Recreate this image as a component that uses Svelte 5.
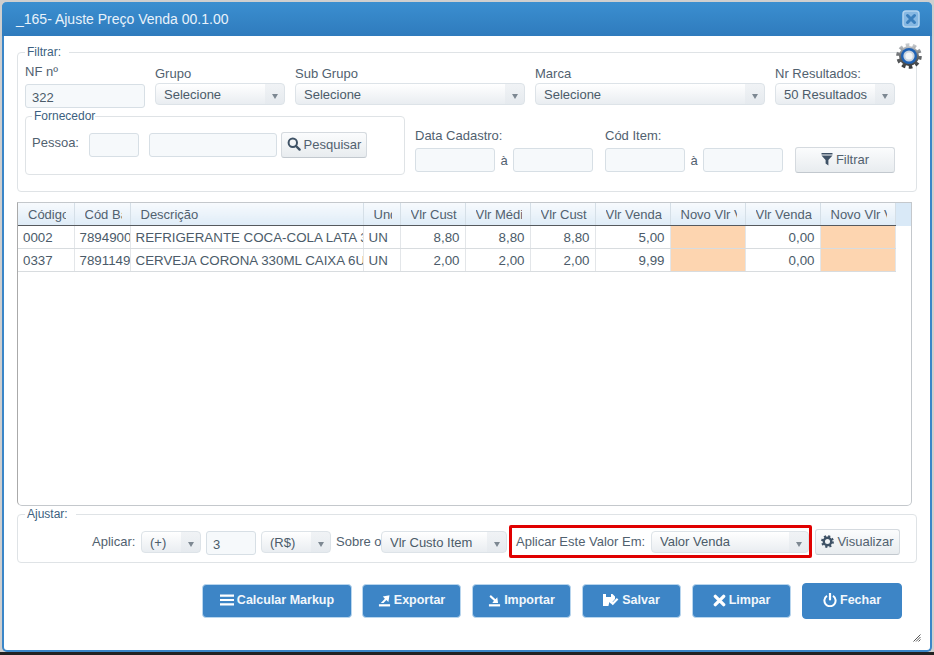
<script lang="ts">
	const columns = [
		{ label: 'Código', width: 56 },
		{ label: 'Cód Barras', width: 56 },
		{ label: 'Descrição', width: 233 },
		{ label: 'Und', width: 37 },
		{ label: 'Vlr Custo', width: 65 },
		{ label: 'Vlr Médio', width: 65 },
		{ label: 'Vlr Custo', width: 65 },
		{ label: 'Vlr Venda', width: 75 },
		{ label: 'Novo Vlr Venda', width: 75 },
		{ label: 'Vlr Venda', width: 75 },
		{ label: 'Novo Vlr Venda', width: 75 }
	];

	const rows = [
		['0002', '7894900011517', 'REFRIGERANTE COCA-COLA LATA 350ML', 'UN', '8,80', '8,80', '8,80', '5,00', '', '0,00', ''],
		['0337', '7891149103102', 'CERVEJA CORONA 330ML CAIXA 6UN', 'UN', '2,00', '2,00', '2,00', '9,99', '', '0,00', '']
	];

	function cellClass(i: number) {
		if (i === 8 || i === 10) return 'edit';
		return i >= 4 ? 'num' : '';
	}
</script>

{#snippet select(text: string, width: number)}
	<div class="select" style="width: {width}px">
		<select><option>{text}</option></select>
		<span class="arrow"></span>
	</div>
{/snippet}

<div class="page">
	<div class="window">
		<header class="titlebar">
			<h1>_165- Ajuste Preço Venda 00.1.00</h1>
			<button class="close" aria-label="Fechar janela">
				<svg viewBox="0 0 18 18" width="18" height="18">
					<rect x="1" y="1" width="16" height="16" rx="3" fill="#86b8e3" stroke="#b5d5f0" stroke-width="1.5" />
					<path d="M5.5 5.5l7 7M12.5 5.5l-7 7" stroke="#3a7fbd" stroke-width="3" stroke-linecap="round" />
				</svg>
			</button>
		</header>

		<svg class="gear" viewBox="0 0 26 26" width="26" height="26" aria-hidden="true">
			<defs>
				<linearGradient id="teeth" x1="0" y1="0" x2="0" y2="1">
					<stop offset="0" stop-color="#c4c8cc" />
					<stop offset="0.45" stop-color="#6d7073" />
					<stop offset="1" stop-color="#3c3e40" />
				</linearGradient>
			</defs>
			<circle cx="13" cy="13" r="11" fill="none" stroke="url(#teeth)" stroke-width="3.6" stroke-dasharray="3.6 3.3" />
			<circle cx="13" cy="13" r="10" fill="url(#teeth)" />
			<circle cx="13" cy="13" r="8" fill="#1f62b5" />
			<circle cx="13" cy="13" r="5.6" fill="#c9d3de" />
			<circle cx="13" cy="13" r="3.6" fill="#f2f5f8" />
		</svg>

		<fieldset class="filtrar">
			<legend>Filtrar:</legend>
			<div class="line">
				<div class="field nf">
					<span class="label">NF nº</span>
					<input class="nf-input" value="322" />
				</div>
				<div class="field">
					<span class="label">Grupo</span>
					{@render select('Selecione', 130)}
				</div>
				<div class="field">
					<span class="label">Sub Grupo</span>
					{@render select('Selecione', 230)}
				</div>
				<div class="field">
					<span class="label">Marca</span>
					{@render select('Selecione', 230)}
				</div>
				<div class="field">
					<span class="label">Nr Resultados:</span>
					{@render select('50 Resultados', 120)}
				</div>
			</div>
			<div class="line second">
				<fieldset class="fornecedor">
					<legend>Fornecedor</legend>
					<span class="label pessoa">Pessoa:</span>
					<input class="small" />
					<input class="name" />
					<button class="btn search">
						<svg viewBox="0 0 14 14" width="14" height="14">
							<circle cx="5.8" cy="5.8" r="4.2" fill="none" stroke="#3f5266" stroke-width="2" />
							<path d="M9 9l3.6 3.6" stroke="#3f5266" stroke-width="2.4" stroke-linecap="round" />
						</svg>
						Pesquisar
					</button>
				</fieldset>
				<div class="field range">
					<span class="label">Data Cadastro:</span>
					<div class="pair">
						<input class="date" />
						<span class="a">à</span>
						<input class="date" />
					</div>
				</div>
				<div class="field range item">
					<span class="label">Cód Item:</span>
					<div class="pair">
						<input class="date" />
						<span class="a">à</span>
						<input class="date" />
					</div>
				</div>
				<button class="btn filter">
					<svg viewBox="0 0 12 14" width="12" height="14">
						<path d="M0.5 1h11v1.4h-11zM0.5 3.6h11L7.4 8v5.4L4.6 11.6V8z" fill="#3f5266" />
					</svg>
					Filtrar
				</button>
			</div>
		</fieldset>

		<div class="grid">
			<table>
				<colgroup>
					{#each columns as col}
						<col style="width: {col.width}px" />
					{/each}
					<col />
				</colgroup>
				<thead>
					<tr>
						{#each columns as col}
							<th><div>{col.label}</div></th>
						{/each}
						<th class="filler"></th>
					</tr>
				</thead>
				<tbody>
					{#each rows as row}
						<tr>
							{#each row as cell, i}
								<td class={cellClass(i)}><div>{cell}</div></td>
							{/each}
						</tr>
					{/each}
				</tbody>
			</table>
		</div>

		<fieldset class="ajustar">
			<legend>Ajustar:</legend>
			<div class="adjust">
				<span class="label aplicar">Aplicar:</span>
				{@render select('(+)', 60)}
				<input class="qty" value="3" />
				{@render select('(R$)', 70)}
				<span class="label sobre">Sobre o</span>
				{@render select('Vlr Custo Item', 126)}
				<div class="highlight">
					<span class="label">Aplicar Este Valor Em:</span>
					{@render select('Valor Venda', 158)}
				</div>
				<button class="btn visualizar">
					<svg viewBox="0 0 14 14" width="13" height="13">
						<circle cx="7" cy="7" r="4" fill="none" stroke="#3f5266" stroke-width="2.6" />
						<circle cx="7" cy="7" r="5.6" fill="none" stroke="#3f5266" stroke-width="2.6" stroke-dasharray="2.2 2.2" />
					</svg>
					Visualizar
				</button>
			</div>
		</fieldset>

		<div class="actions">
			<button class="primary markup">
				<svg viewBox="0 0 14 14" width="14" height="14">
					<path d="M0 1.5h14v2.2H0zM0 5.9h14v2.2H0zM0 10.3h14v2.2H0z" fill="#fff" />
				</svg>
				Calcular Markup
			</button>
			<button class="primary io">
				<svg viewBox="0 0 14 14" width="13" height="13">
					<path d="M1 11h12v2.4H1z" fill="#fff" />
					<path d="M3 9.6L7.4 5 5.2 2.8 12.4 1.4 11.2 8.6 9 6.4 6 9.6z" fill="#fff" />
				</svg>
				Exportar
			</button>
			<button class="primary io">
				<svg viewBox="0 0 14 14" width="13" height="13">
					<path d="M1 11h12v2.4H1z" fill="#fff" />
					<path d="M3 1.2L8 5.6 10 3.6 10.8 9.8 4.6 9.6 6.4 7.4 1.6 3z" fill="#fff" />
				</svg>
				Importar
			</button>
			<button class="primary io">
				<svg viewBox="0 0 16 14" width="16" height="14">
					<path d="M0 1h9.5L12 3.5V6L8 10.6 6.4 9 5.4 13H0z" fill="#fff" />
					<path d="M3 1h5v3H3z" fill="#3d85c6" />
					<path d="M7.4 8.4l2.4 2.4 4.8-5" fill="none" stroke="#fff" stroke-width="2.2" />
				</svg>
				Salvar
			</button>
			<button class="primary io">
				<svg viewBox="0 0 14 14" width="13" height="13">
					<path d="M2.5 2.5l9 9M11.5 2.5l-9 9" stroke="#fff" stroke-width="3.6" stroke-linecap="round" />
				</svg>
				Limpar
			</button>
			<button class="primary fechar">
				<svg viewBox="0 0 14 14" width="14" height="14">
					<path d="M4 2.9a5.6 5.6 0 1 0 6 0" fill="none" stroke="#fff" stroke-width="2" />
					<path d="M7 0.5v6" stroke="#fff" stroke-width="2.2" stroke-linecap="round" />
				</svg>
				Fechar
			</button>
		</div>

		<svg class="resize" viewBox="0 0 8 8" width="8" height="8" aria-hidden="true">
			<path d="M0.5 7.5l7-7M3 7.5l4.5-4.5M5.5 7.5l2-2" stroke="#444" stroke-width="0.9" />
		</svg>
	</div>
</div>

<style>
	:global(body) {
		font-family: 'Liberation Sans', Arial, sans-serif;
		overflow: hidden;
	}
	.page {
		height: 655px;
		padding: 2px 2px 0;
		box-sizing: border-box;
		background: linear-gradient(#cfcfcf 652px, #222 652px);
	}
	.window {
		position: relative;
		height: 650px;
		box-sizing: border-box;
		background: #fff;
		border: 2px solid #3a86c8;
		border-top: 0;
		border-radius: 5px;
	}
	.titlebar {
		display: flex;
		align-items: center;
		justify-content: space-between;
		height: 34px;
		margin: 0 -2px;
		padding: 0 12px 0 14px;
		background: linear-gradient(#3b8fd0, #2f7bbd);
		border-radius: 5px 5px 0 0;
	}
	h1 {
		margin: 0;
		font-size: 14px;
		font-weight: 400;
		color: #e8f2fb;
	}
	.close {
		display: flex;
		padding: 0;
		border: 0;
		background: none;
	}
	.gear {
		position: absolute;
		top: 41px;
		right: 8px;
	}
	fieldset {
		margin: 0;
		min-width: 0;
		box-sizing: border-box;
		border: 1px solid #dfe3e6;
		border-radius: 4px;
	}
	legend {
		font-size: 12px;
		line-height: 14px;
		color: #3c5f80;
		padding: 0 0 0 2px;
	}
	.filtrar {
		height: 147px;
		width: 900px;
		margin: 9px 0 0 13px;
		padding: 5px 7px 0;
	}
	.filtrar > legend,
	.ajustar > legend {
		padding-right: 8px;
	}
	.line {
		display: flex;
		gap: 10px;
	}
	.field {
		display: flex;
		flex-direction: column;
		padding-top: 2px;
		height: 47px;
		gap: 2px;
	}
	.label {
		font-size: 13px;
		line-height: 15px;
		color: #51616f;
		white-space: nowrap;
	}
	.field.nf {
		padding-top: 0;
		gap: 5px;
	}
	.select {
		position: relative;
		height: 22px;
		box-sizing: border-box;
		flex: none;
	}
	select {
		appearance: none;
		display: block;
		width: 100%;
		height: 22px;
		box-sizing: border-box;
		padding: 0 22px 0 8px;
		font: 13px 'Liberation Sans', Arial, sans-serif;
		color: #4b5b69;
		border: 1px solid #dde3e8;
		border-radius: 4px;
		background: linear-gradient(90deg, transparent calc(100% - 19px), rgba(226, 231, 236, 0.5) calc(100% - 19px)), linear-gradient(#fff, #e9edf1);
	}
	.arrow {
		position: absolute;
		right: 7px;
		top: 11px;
		border: 3px solid transparent;
		border-top: 5px solid #7d8892;
		border-bottom: 0;
	}
	input {
		box-sizing: border-box;
		margin: 0;
		padding: 2px 6px 0;
		font: 13px 'Liberation Sans', Arial, sans-serif;
		color: #4b5b69;
		background: #f6f9fb;
		border: 1px solid #d7dfe5;
		border-radius: 3px;
	}
	.nf-input {
		width: 120px;
		height: 24px;
	}
	.second {
		margin-top: 1px;
		gap: 0;
	}
	.fornecedor {
		display: flex;
		align-items: flex-start;
		width: 380px;
		height: 66px;
		margin-top: -5px;
		padding: 10px 0 0 6px;
	}
	.pessoa {
		line-height: 20px;
		width: 57px;
	}
	.small {
		width: 50px;
		height: 24px;
	}
	.name {
		width: 128px;
		height: 24px;
		margin: 0 4px 0 10px;
	}
	.btn {
		display: inline-flex;
		align-items: center;
		justify-content: center;
		gap: 3px;
		box-sizing: border-box;
		padding: 0 0 2px;
		height: 26px;
		font: 13px 'Liberation Sans', Arial, sans-serif;
		color: #51616f;
		background: linear-gradient(#fbfcfd, #e8ecef);
		border: 1px solid #d5dadf;
		border-bottom-color: #c2c8ce;
		border-radius: 3px;
	}
	.search {
		width: 86px;
		margin-top: -1px;
	}
	.range {
		margin: 14px 0 0 10px;
		padding-top: 0;
		height: auto;
		gap: 5px;
	}
	.range.item {
		margin-left: 12px;
	}
	.pair {
		display: flex;
		align-items: center;
	}
	.date {
		width: 80px;
		height: 24px;
	}
	.a {
		width: 18px;
		text-align: center;
		font-size: 13px;
		color: #51616f;
	}
	.filter {
		width: 100px;
		margin: 33px 0 0 12px;
	}
	.grid {
		width: 895px;
		height: 304px;
		box-sizing: border-box;
		margin: 10px 0 0 13px;
		border: 1px solid #c4c8cc;
		border-left-color: #aaa;
		border-radius: 0 0 5px 5px;
		overflow: hidden;
	}
	table {
		width: 100%;
		table-layout: fixed;
		border-collapse: collapse;
	}
	th {
		height: 22px;
		padding: 0;
		font-size: 13px;
		font-weight: 400;
		color: #51616f;
		text-align: left;
		background: linear-gradient(#f7fafd, #dfecf7);
		border-right: 1px solid #d5dfe7;
		border-bottom: 1px solid #55595d;
	}
	th div {
		overflow: hidden;
		white-space: nowrap;
		margin: 0 8px 0 10px;
	}
	th.filler {
		background: #d9e9f7;
		border-right: 0;
		border-bottom: 0;
	}
	td {
		height: 23px;
		box-sizing: border-box;
		padding: 0;
		font-size: 13.33px;
		color: #4b5b69;
		border-right: 1px solid #e3e6e9;
		border-bottom: 1px solid #d8dcdf;
	}
	td div {
		overflow: hidden;
		white-space: nowrap;
		padding-left: 5px;
	}
	td.num div {
		text-align: right;
		padding-right: 5px;
	}
	td.edit {
		background: #fdd5b0;
	}
	.ajustar {
		width: 900px;
		height: 56px;
		margin: 1px 0 0 13px;
		padding: 0 0 0 7px;
	}
	.adjust {
		display: flex;
		align-items: flex-start;
		height: 34px;
		padding: 10px 0 0 67px;
	}
	.adjust > .label {
		line-height: 22px;
	}
	.aplicar {
		width: 49px;
	}
	.qty {
		width: 50px;
		height: 24px;
		margin: 0 5px;
	}
	.sobre {
		width: 50px;
		padding-left: 5px;
		box-sizing: border-box;
	}
	.highlight {
		display: flex;
		align-items: center;
		justify-content: space-between;
		width: 303px;
		height: 33px;
		box-sizing: border-box;
		margin: -6px 3px 0 2px;
		padding-left: 4px;
		border: 3px solid #e00000;
		border-radius: 2px;
	}
	.visualizar {
		width: 85px;
		margin-top: -2px;
	}
	.actions {
		display: flex;
		align-items: center;
		gap: 11px;
		margin: 20px 0 0 198px;
	}
	.primary {
		display: inline-flex;
		align-items: center;
		justify-content: center;
		gap: 3px;
		box-sizing: border-box;
		height: 34px;
		padding: 0 0 2px;
		font: 700 12.5px 'Liberation Sans', Arial, sans-serif;
		color: #f2f7fb;
		background: #3d85c6;
		border: 1px solid #b9d6ee;
		border-radius: 4px;
	}
	.markup {
		width: 150px;
		margin-right: -1px;
	}
	.io {
		width: 99px;
	}
	.fechar {
		width: 100px;
		height: 36px;
		border-color: #3d85c6;
	}
	.resize {
		position: absolute;
		right: 9px;
		bottom: 8px;
	}
</style>
